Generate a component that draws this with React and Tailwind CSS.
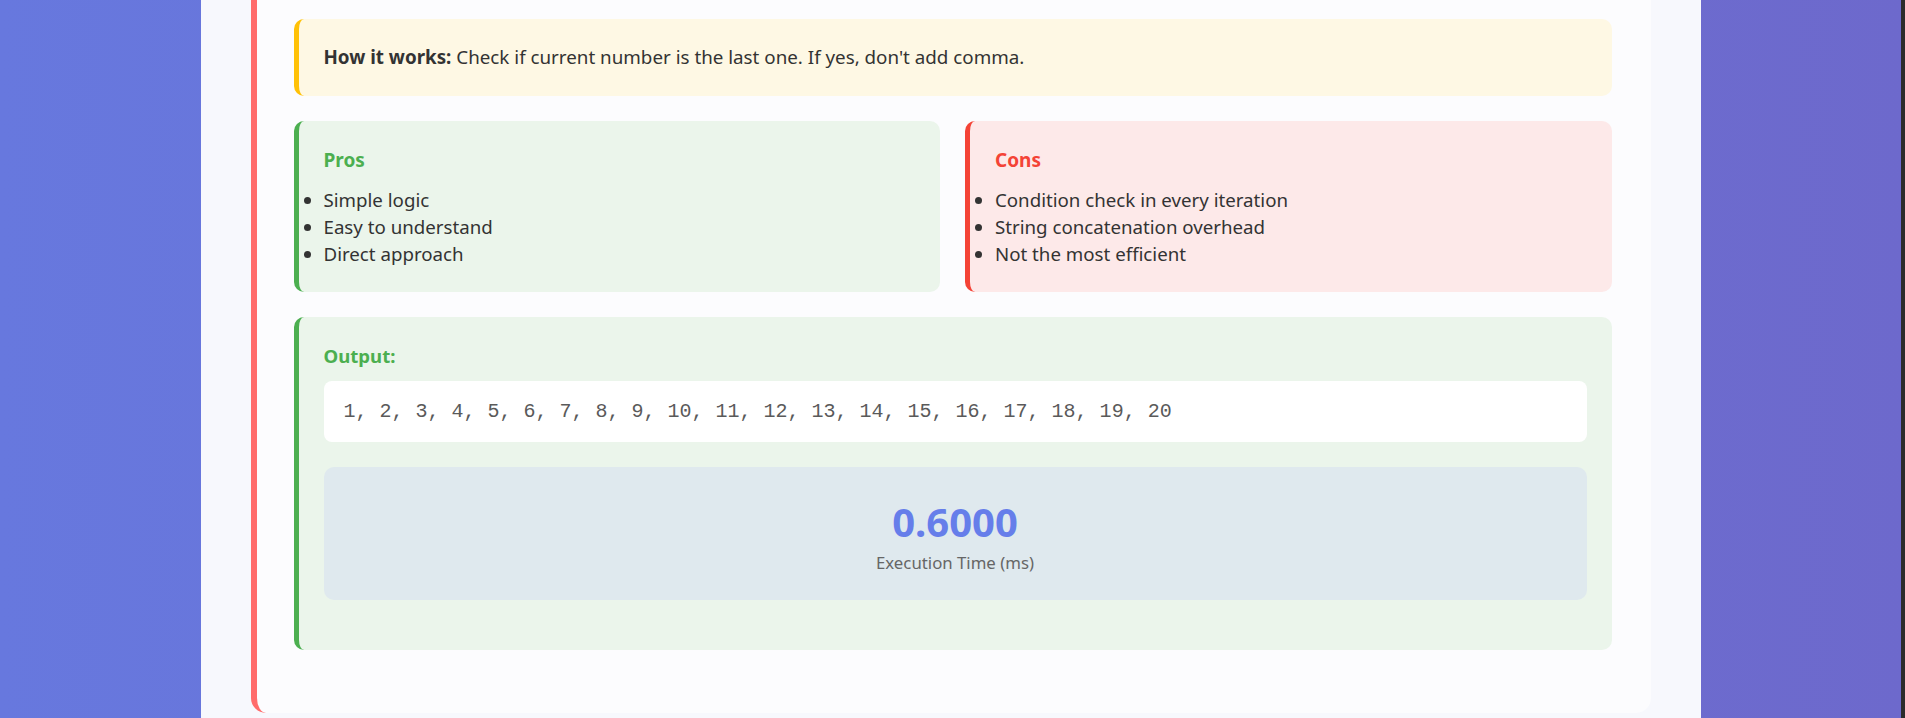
export default function App() {
  const pros = ['Simple logic', 'Easy to understand', 'Direct approach']
  const cons = ['Condition check in every iteration', 'String concatenation overhead', 'Not the most efficient']
  const output = Array.from({ length: 20 }, (_, i) => i + 1).join(', ')

  return (
    <div className="flex h-[718px] overflow-hidden bg-gradient-to-r from-[#6778de] to-[#6d69cc] font-['Noto_Sans',sans-serif] text-[#333]">
      <div className="flex flex-1 justify-center">
        <div className="w-[1500px] bg-[#f7f8fd] px-[50px] pb-[5px]">
          <div className="rounded-b-[15px] border-l-[6px] border-[#ff6b6b] bg-[#fcfcfe] pb-[63px] pl-[37px] pr-[39px] pt-[19px]">
            <div className="rounded-[10px] border-l-[5px] border-[#ffc107] bg-[#fef8e4] px-[25px] py-[25px] text-[18.8px] leading-[27px]">
              <strong className="font-bold">How it works:</strong> Check if current number is the last one. If yes, don't add comma.
            </div>

            <div className="mt-[25px] grid grid-cols-2 gap-[25px]">
              <div className="rounded-[10px] border-l-[5px] border-[#4caf50] bg-[#ebf5eb] p-[25px]">
                <h4 className="mb-[12px] text-[19px] font-bold leading-[28px] text-[#4caf50]">Pros</h4>
                <ul className="list-disc text-[18.7px] leading-[27px]">
                  {pros.map((p) => (
                    <li key={p}>{p}</li>
                  ))}
                </ul>
              </div>
              <div className="rounded-[10px] border-l-[5px] border-[#f44336] bg-[#fde9e9] p-[25px]">
                <h4 className="mb-[12px] text-[19px] font-bold leading-[28px] text-[#f44336]">Cons</h4>
                <ul className="list-disc text-[18.7px] leading-[27px]">
                  {cons.map((c) => (
                    <li key={c}>{c}</li>
                  ))}
                </ul>
              </div>
            </div>

            <div className="mt-[25px] rounded-[10px] border-l-[5px] border-[#4caf50] bg-[#ebf5eb] p-[25px] pb-[50px]">
              <h4 className="mb-[11px] text-[18.6px] font-bold leading-[28px] text-[#4caf50]">Output:</h4>
              <div className="rounded-[8px] bg-white px-[20px] py-[15px] font-['Liberation_Mono',monospace] text-[20px] leading-[31px] text-[#5a5a5a]">
                {output}
              </div>
              <div className="mt-[25px] flex h-[133px] flex-col items-center justify-center rounded-[10px] bg-[#dfe9ee]">
                <div className="text-[40px] font-bold leading-[58px] text-[#667eea]">0.6000</div>
                <div className="text-[16.8px] leading-[24px] text-[#666]">Execution Time (ms)</div>
              </div>
            </div>
          </div>
        </div>
      </div>
      <div className="w-[4px] bg-[#2b2b2b]" />
    </div>
  )
}
